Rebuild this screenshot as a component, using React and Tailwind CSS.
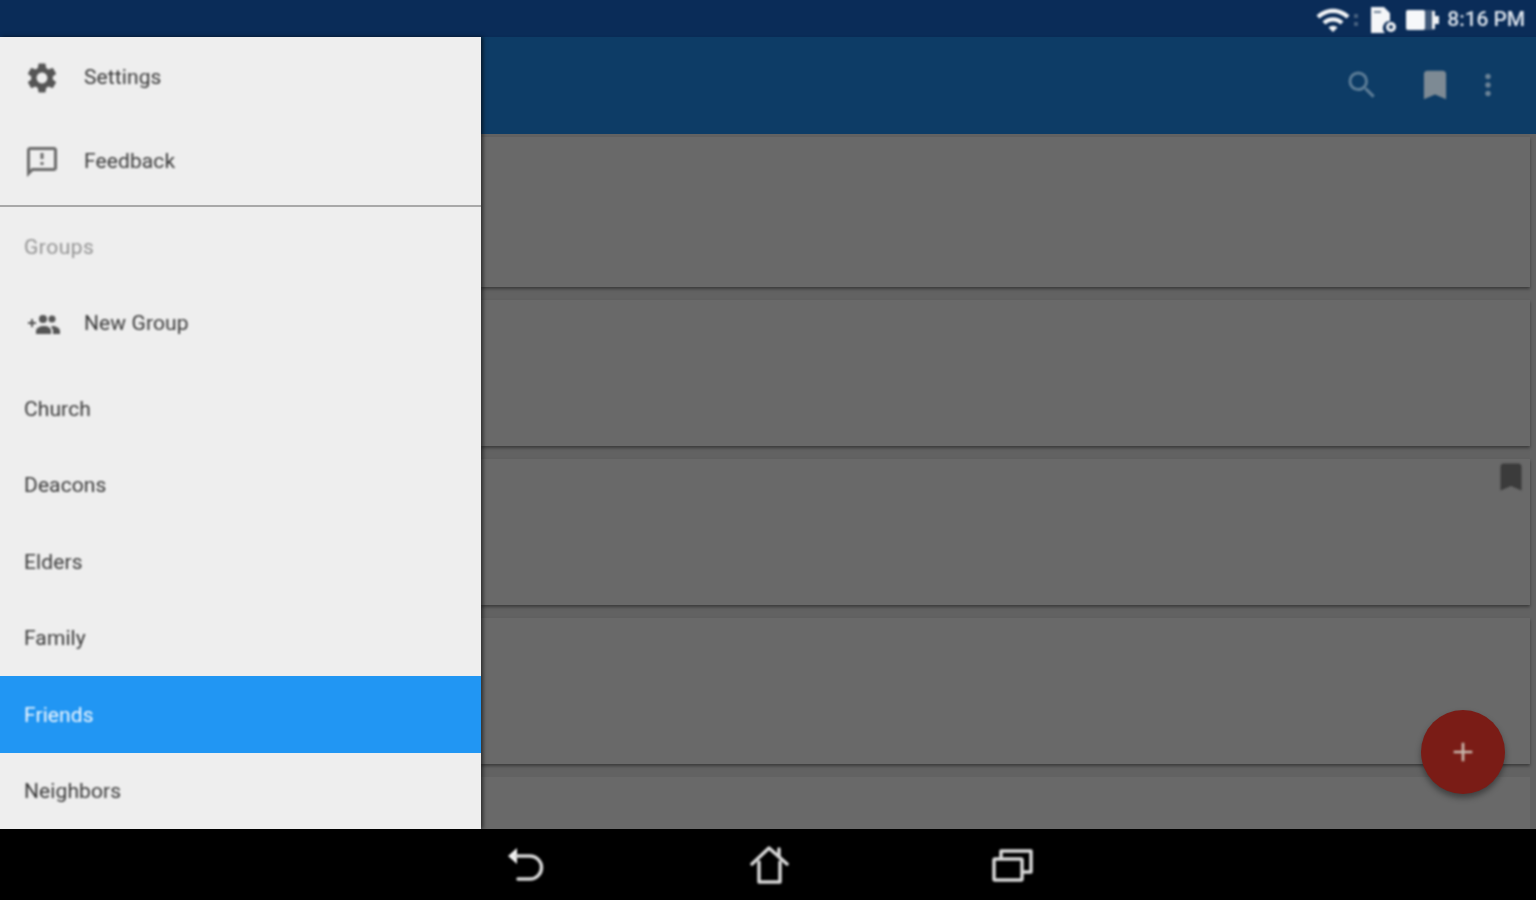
import { MdSettings, MdOutlineFeedback, MdSearch, MdBookmark, MdMoreVert, MdAdd, MdWifi } from "react-icons/md";

const groups = ["Church", "Deacons", "Elders", "Family", "Friends", "Neighbors"];

function FileGearIcon() {
  return (
    <svg width="28" height="28" viewBox="0 0 28 28">
      <path d="M1 1h13l6 6v8a7 7 0 0 0-5 12H1z" fill="#f4f6f8" />
      <rect x="4" y="5" width="7" height="2" fill="#6d7f94" />
      <circle cx="21" cy="21" r="5" fill="#f4f6f8" />
      <circle cx="21" cy="21" r="2" fill="#16365f" />
    </svg>
  );
}

function BatteryIcon() {
  return (
    <svg width="34" height="24" viewBox="0 0 34 24">
      <rect x="0" y="2" width="29" height="20" rx="2" fill="#3f5878" />
      <rect x="0" y="2" width="19" height="20" rx="2" fill="#f6f8fa" />
      <rect x="26" y="3" width="3" height="18" fill="#f0f2f5" />
      <rect x="29" y="8" width="4" height="8" fill="#f0f2f5" />
    </svg>
  );
}

function NewGroupIcon() {
  return (
    <svg width="38" height="24" viewBox="0 0 38 24" fill="#555555" className="ml-[1px]">
      <path d="M3 10h3V7h2v3h3v2H8v3H6v-3H3z" />
      <circle cx="18" cy="7" r="4" />
      <circle cx="27" cy="7" r="3.500" />
      <path d="M11 22v-3c0-3 4-5 8-5s7 2 7 5v3z" />
      <path d="M27 14c4 0 8 2 8 5v3h-7v-3c0-2-1-3-2-4z" />
    </svg>
  );
}

function BackIcon() {
  return (
    <svg width="38" height="36" viewBox="0 0 38 36" fill="none">
      <path d="M1 9 10 1v16z" fill="#f2f2f2" />
      <path d="M9 9h14a11.500 11.500 0 0 1 0 23H11" stroke="#d8d8d8" strokeWidth="3.500" strokeLinecap="round" />
    </svg>
  );
}

function HomeIcon() {
  return (
    <svg width="40" height="38" viewBox="0 0 40 38" fill="none" stroke="#d8d8d8" strokeWidth="3.500" strokeLinecap="round" strokeLinejoin="round">
      <path d="M2 18 19 2l18 16" />
      <path d="M29 3v7" />
      <path d="M9 16v20h21V16" />
    </svg>
  );
}

function RecentIcon() {
  return (
    <svg width="42" height="34" viewBox="0 0 42 34" fill="none" stroke="#d8d8d8" strokeWidth="3.500" strokeLinejoin="round">
      <rect x="2" y="11" width="28" height="21" rx="1" />
      <path d="M9 11V3h30v21h-9" />
    </svg>
  );
}

function Row({ icon, label }) {
  return (
    <div className="flex h-[84px] items-center pb-[2px] pl-[24px]">
      <div className="flex w-[60px] shrink-0 items-center blur-[0.9px]">{icon}</div>
      <span className="blur-[0.9px]">{label}</span>
    </div>
  );
}

export default function App() {
  return (
    <div className="flex h-[900px] w-[1536px] flex-col overflow-hidden bg-black font-['Roboto',sans-serif]">
      <div className="flex h-[37px] shrink-0 items-center justify-end bg-[#0a2c58] pr-[11px] pt-[2px] text-[#dfe6ee]">
        <div className="flex items-center blur-[0.9px]">
          <MdWifi size={36} className="mr-[3px] text-[#f4f6f8]" />
          <div className="mr-[12px] flex flex-col gap-[4px]">
            <span className="h-[4px] w-[4px] bg-[#48607f]" />
            <span className="h-[4px] w-[4px] bg-[#48607f]" />
          </div>
          <FileGearIcon />
          <div className="ml-[8px] mr-[7px]"><BatteryIcon /></div>
          <span className="text-[21px] font-medium tracking-[-0.1px]">8:16 PM</span>
        </div>
      </div>

      <div className="relative flex min-h-0 flex-1">
        <aside className="z-10 flex w-[481px] shrink-0 flex-col overflow-hidden bg-[#eeeeee] text-[21px] tracking-[0.1px] text-[#3a3a3a] shadow-[2px_0_4px_rgba(0,0,0,0.6)]">
          <Row icon={<MdSettings size={36} className="text-[#555555]" />} label="Settings" />
          <Row icon={<MdOutlineFeedback size={36} className="text-[#6a6a6a]" />} label="Feedback" />
          <div className="h-[2px] shrink-0 bg-[#a8a8a8]" />
          <div className="flex h-[78px] shrink-0 items-center pl-[24px] pt-[3px] tracking-[0.5px] text-[#939393]">
            <span className="blur-[0.9px]">Groups</span>
          </div>
          <div className="flex h-[76px] shrink-0 items-center pl-[24px] pt-[2px]">
            <div className="flex w-[60px] shrink-0 items-center blur-[0.9px]"><NewGroupIcon /></div>
            <span className="blur-[0.9px]">New Group</span>
          </div>
          <div className="h-[9px] shrink-0" />
          {groups.map((g) => (
            <div
              key={g}
              className={
                g === "Friends"
                  ? "flex h-[76.5px] shrink-0 items-center bg-[#2196f3] pl-[24px] pt-[2px] text-[#f2f8fe]"
                  : "flex h-[76.5px] shrink-0 items-center pl-[24px] pt-[2px]"
              }
            >
              <span className="blur-[0.9px]">{g}</span>
            </div>
          ))}
        </aside>

        <main className="flex min-w-0 flex-1 flex-col">
          <div className="flex h-[97px] shrink-0 items-center justify-end bg-[#0d3c66] pb-[2px] pr-[32px] shadow-[0_2px_3px_rgba(0,0,0,0.35)]">
            <div className="flex items-center blur-[0.9px]">
              <MdSearch size={36} className="mr-[36px] text-[#5d7d97]" />
              <MdBookmark size={38} className="mr-[17px] text-[#7d8a94]" />
              <MdMoreVert size={34} className="-mr-[1px] text-[#6d8498]" />
            </div>
          </div>
          <div className="flex min-h-0 flex-1 flex-col gap-[13px] overflow-hidden bg-[#626262] pr-[6px] pt-[3px]">
            <div className="h-[150px] shrink-0 bg-[#696969] shadow-[0_2px_3px_rgba(0,0,0,0.4)]" />
            <div className="h-[146px] shrink-0 bg-[#696969] shadow-[0_2px_3px_rgba(0,0,0,0.4)]" />
            <div className="relative h-[146px] shrink-0 bg-[#696969] shadow-[0_2px_3px_rgba(0,0,0,0.4)]">
              <MdBookmark size={36} className="absolute right-[1px] top-[0px] text-[#3b3b3b] blur-[0.9px]" />
            </div>
            <div className="h-[146px] shrink-0 bg-[#696969] shadow-[0_2px_3px_rgba(0,0,0,0.4)]" />
            <div className="h-[146px] shrink-0 bg-[#696969]" />
          </div>
        </main>

        <button className="absolute left-[1421px] top-[673px] z-20 flex h-[84px] w-[84px] items-center justify-center rounded-full bg-[#7a1c16] shadow-[0_4px_6px_rgba(0,0,0,0.4)]">
          <MdAdd size={32} className="text-[#c9b9ae] blur-[0.9px]" />
        </button>
      </div>

      <nav className="flex h-[71px] shrink-0 items-center bg-black pl-[507px]">
        <div className="flex items-center blur-[0.9px]">
          <BackIcon />
          <div className="ml-[205px]"><HomeIcon /></div>
          <div className="ml-[202px]"><RecentIcon /></div>
        </div>
      </nav>
    </div>
  );
}
